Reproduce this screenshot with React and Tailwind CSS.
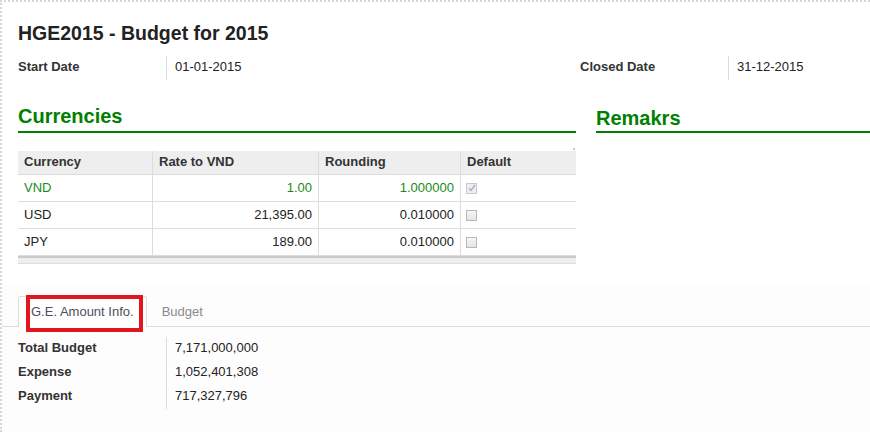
import React from 'react';

const currencies = [
    { code: 'VND', rate: '1.00', rounding: '1.000000', isDefault: true },
    { code: 'USD', rate: '21,395.00', rounding: '0.010000', isDefault: false },
    { code: 'JPY', rate: '189.00', rounding: '0.010000', isDefault: false }
];

const amounts = [
    { label: 'Total Budget', value: '7,171,000,000' },
    { label: 'Expense', value: '1,052,401,308' },
    { label: 'Payment', value: '717,327,796' }
];

const Checkbox = ({ checked }) => (
    <div className={`w-[11px] h-[11px] border flex items-center justify-center ${checked ? 'border-[#c9c9c9] bg-[#eeeeee]' : 'border-[#b8b8b8] bg-gradient-to-b from-[#f6f6f6] to-[#e4e4e4]'}`}>
        {checked && (
            <svg width="8" height="8" viewBox="0 0 8 8">
                <path d="M1 4.2 L3 6.3 L7 1" fill="none" stroke="#a3afc9" strokeWidth="1.4" />
            </svg>
        )}
    </div>
);

const Field = ({ label, value, width = 'w-[148px]' }) => (
    <div className="flex h-6">
        <div className={`${width} pt-px leading-5 font-bold text-[#333]`}>{label}</div>
        <div className="border-l border-[#dddddd] pl-2 pt-px leading-5 text-[#222]">{value}</div>
    </div>
);

const App = () => {
    return (
        <div className="relative w-[870px] h-[432px] overflow-hidden bg-white border-t-2 border-l-2 border-dotted border-[#d6d6d6] flex flex-col text-[13px] font-['Liberation_Sans',Arial,sans-serif]">
            {/* Header + currencies */}
            <div className="pl-4">
                <h1 className="mt-[19px] text-[19.5px] leading-6 font-bold text-[#222]">HGE2015 - Budget for 2015</h1>

                <div className="mt-[11px] flex">
                    <div className="w-[562px]">
                        <Field label="Start Date" value="01-01-2015" />
                    </div>
                    <Field label="Closed Date" value="31-12-2015" />
                </div>

                <div className="mt-[23px] flex">
                    <h2 className="w-[558px] pt-px pb-px border-b-2 border-[#008000] text-[20px] leading-6 font-bold text-[#008000]">Currencies</h2>
                    <h2 className="ml-5 mt-[2px] flex-1 pt-px pb-px border-b-2 border-[#008000] text-[20px] leading-6 font-bold text-[#008000]">Remakrs</h2>
                </div>

                {/* Currency table */}
                <div className="relative mt-[18px] w-[558px]">
                    <div className="absolute -top-[3px] left-[555px] w-[2px] h-[2px] bg-[#cccccc]" />
                    <div className="grid grid-cols-[134px_166px_142px_116px] h-6 bg-[#eeeeee] border-b border-[#dddddd] font-bold text-[#333]">
                        <div className="px-[6px] leading-[22px]">Currency</div>
                        <div className="px-[6px] leading-[22px] border-l border-[#dddddd]">Rate to VND</div>
                        <div className="px-[6px] leading-[22px] border-l border-[#dddddd]">Rounding</div>
                        <div className="px-[6px] leading-[22px] border-l border-[#dddddd]">Default</div>
                    </div>
                    {currencies.map(c => (
                        <div
                            key={c.code}
                            className={`grid grid-cols-[134px_166px_142px_116px] h-[27px] border-b border-[#dddddd] ${c.isDefault ? 'text-[#1a8a1a]' : 'text-[#222]'}`}
                        >
                            <div className="px-[6px] leading-[25px]">{c.code}</div>
                            <div className="px-[6px] leading-[25px] text-right border-l border-[#dddddd]">{c.rate}</div>
                            <div className="px-[6px] leading-[25px] text-right border-l border-[#dddddd]">{c.rounding}</div>
                            <div className="pl-[5px] flex items-center border-l border-[#dddddd]">
                                <Checkbox checked={c.isDefault} />
                            </div>
                        </div>
                    ))}
                    <div className="h-2 border-t-2 border-[#cacaca] bg-[#eeeeee] border-b border-b-[#dddddd]" />
                </div>
            </div>

            {/* Notebook */}
            <div className="mt-5 flex-1 bg-[#fdfdfd]">
                <div className="pt-3 pl-4 flex border-b border-[#dddddd]">
                    <div className="h-[31px] -mb-px px-3 pt-[5px] leading-5 bg-white border border-b-0 border-[#dddddd] rounded-t-[3px] text-[#4e4e5c]">
                        G.E. Amount Info.
                    </div>
                    <div className="h-[30px] ml-[3px] px-3 pt-[6px] leading-5 text-[#8a8a8a]">Budget</div>
                </div>

                <div className="mt-[10px] pl-4 flex">
                    <div className="w-[148px] font-bold text-[#333]">
                        {amounts.map(a => (
                            <div key={a.label} className="h-6 leading-[22px]">{a.label}</div>
                        ))}
                    </div>
                    <div className="border-l border-[#dddddd] pl-2 text-[#222]">
                        {amounts.map(a => (
                            <div key={a.label} className="h-6 leading-[22px]">{a.value}</div>
                        ))}
                    </div>
                </div>
            </div>

            {/* Annotation box */}
            <div className="absolute left-[24px] top-[293px] w-[117px] h-[37px] border-4 border-[#e3161e]" />
        </div>
    );
};

export default App;
